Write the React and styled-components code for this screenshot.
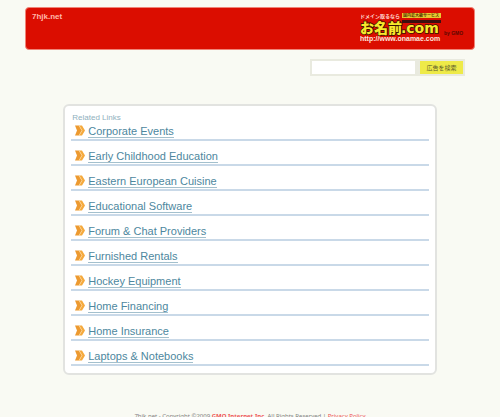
import React from "react";
import styled, { createGlobalStyle } from "styled-components";

const GlobalStyle = createGlobalStyle`
  html {
    overflow: hidden;
  }
  body {
    margin: 0;
    background: #f9faf3;
    font-family: "Liberation Sans", "Noto Sans CJK JP", sans-serif;
  }
`;

const Page = styled.div`
  width: 90%;
  margin: 0 auto;
  padding-top: 7px;
`;

const Header = styled.header`
  display: flex;
  justify-content: space-between;
  align-items: flex-start;
  height: 43px;
  box-sizing: border-box;
  padding: 4px 4px 0 6px;
  background: #db0d00;
  border: 1px solid #f08478;
  border-radius: 4px;
`;

const Domain = styled.h1`
  margin: 0;
  font-family: "Liberation Sans", sans-serif;
  font-size: 8px;
  font-weight: 700;
  line-height: 10px;
  color: #ffb8ac;
`;

const LogoLink = styled.a`
  display: block;
  height: 32px;
`;

const SearchForm = styled.form`
  display: flex;
  width: 155px;
  height: 17px;
  box-sizing: border-box;
  margin: 9px 10px 0 auto;
  padding: 2px;
  gap: 5px;
  background: #e9eadf;
`;

const SearchInput = styled.input`
  flex: 1;
  min-width: 0;
  padding: 0 2px;
  border: 0;
  background: #ffffff;
  font-size: 8px;
`;

const SearchButton = styled.button`
  width: 43px;
  padding: 0;
  border: 0;
  background: #eeea48;
  color: #5c5b2c;
  font-family: "Noto Sans CJK JP", sans-serif;
  font-size: 6px;
  line-height: 12px;
`;

const Panel = styled.main`
  width: 83%;
  box-sizing: border-box;
  margin: 28px auto 0;
  padding: 8px 6px 7px;
  background: #ffffff;
  border: 2px solid #e2e3e0;
  border-radius: 6px;
`;

const PanelTitle = styled.h2`
  margin: 0 0 0 1px;
  font-size: 8px;
  font-weight: 400;
  line-height: 8px;
  color: #8fb0be;
`;

const LinkList = styled.ul`
  margin: 0;
  padding: 0;
  list-style: none;
`;

const LinkRow = styled.li`
  display: flex;
  align-items: flex-end;
  height: 25px;
  box-sizing: border-box;
  gap: 3px;
  padding: 0 0 1px 4px;
  border-bottom: 2px solid #c9d9e8;

  &:first-child {
    height: 19px;
  }
`;

const RelatedLink = styled.a`
  font-size: 11px;
  line-height: 12px;
  color: #4d879e;
  text-decoration: none;
  border-bottom: 1px solid #a3c0cd;
`;

const Arrow = styled.svg`
  width: 10px;
  height: 11px;
  margin-bottom: 2px;
`;

const Footer = styled.footer`
  margin-top: 37px;
  font-family: "Noto Sans", sans-serif;
  font-size: 6px;
  line-height: 8px;
  text-align: center;
  white-space: nowrap;
  color: #808080;
`;

const FooterLink = styled.a`
  color: #ee5555;
  font-weight: ${(props) => (props.$bold ? 700 : 400)};
  text-decoration: none;
`;

const links = [
  "Corporate Events",
  "Early Childhood Education",
  "Eastern European Cuisine",
  "Educational Software",
  "Forum & Chat Providers",
  "Furnished Rentals",
  "Hockey Equipment",
  "Home Financing",
  "Home Insurance",
  "Laptops & Notebooks",
];

const Logo = () => (
  <svg
    width="110"
    height="32"
    viewBox="0 0 110 32"
    fontFamily="Liberation Sans, Noto Sans CJK JP, sans-serif"
    fontWeight="700"
  >
    <text x="0" y="6" fontSize="5" fill="#ffd9d0">
      ドメイン取るなら
    </text>
    <rect x="42" y="1" width="39" height="5" fill="#e8c832" />
    <text x="43" y="5" fontSize="4" fill="#5a3a00">
      国内最大級サービス
    </text>
    <rect x="42" y="8" width="39" height="3" fill="#3c1010" />
    <g fill="#f8e82c" stroke="#381400" strokeWidth="1.5" paintOrder="stroke">
      <text x="0" y="21" fontSize="14" fontWeight="900">
        お名前
      </text>
      <text x="41" y="21" fontSize="14" fontFamily="DejaVu Sans, sans-serif">
        .com
      </text>
    </g>
    <text x="0" y="29" fontSize="7" fill="#ffe3dc">
      http://www.onamae.com
    </text>
    <text x="84" y="23" fontSize="5" fill="#5c0800">
      by GMO
    </text>
  </svg>
);

const ArrowIcon = () => (
  <Arrow viewBox="0 0 10 11" aria-hidden="true">
    <path d="M0 0.5h4l3 5-3 5H0l2-5z" fill="#ed9a30" />
    <path d="M4 0.5h3l3 5-3 5H4l3-5z" fill="#f5a93c" />
    <path d="M4 0.5l3 5-3 5" fill="none" stroke="#fbd79a" strokeWidth="0.8" />
  </Arrow>
);

const App = () => {
  return (
    <Page>
      <GlobalStyle />
      <Header>
        <Domain>7hjk.net</Domain>
        <LogoLink href="#" aria-label="お名前.com">
          <Logo />
        </LogoLink>
      </Header>
      <SearchForm>
        <SearchInput type="text" aria-label="検索" />
        <SearchButton type="button">広告を検索</SearchButton>
      </SearchForm>
      <Panel>
        <PanelTitle>Related Links</PanelTitle>
        <LinkList>
          {links.map((link) => (
            <LinkRow key={link}>
              <ArrowIcon />
              <RelatedLink href="#">{link}</RelatedLink>
            </LinkRow>
          ))}
        </LinkList>
      </Panel>
      <Footer>
        7hjk.net - Copyright ©2009{" "}
        <FooterLink href="#" $bold>
          GMO Internet,Inc.
        </FooterLink>{" "}
        All Rights Reserved | <FooterLink href="#">Privacy Policy</FooterLink>
      </Footer>
    </Page>
  );
};

export default App;
